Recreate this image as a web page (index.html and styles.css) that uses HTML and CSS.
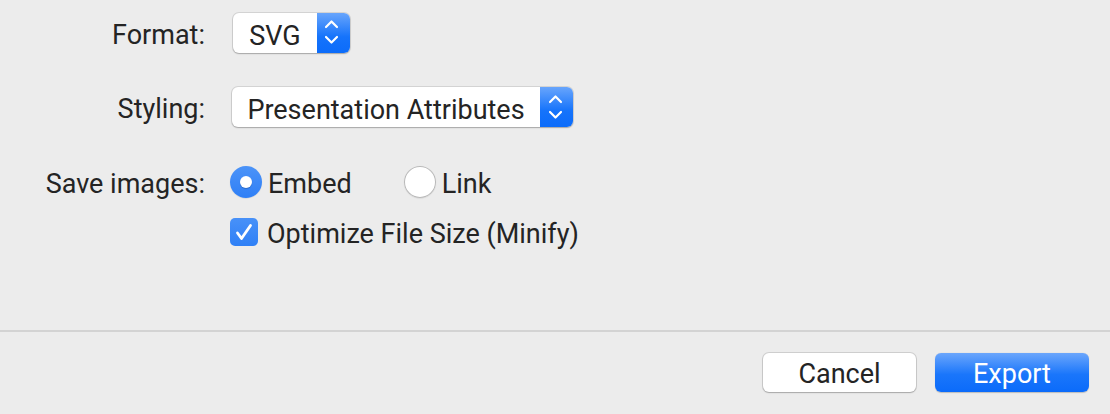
FILE: index.html
```html
<!DOCTYPE html>
<html>
<head>
<meta charset="utf-8">
<link rel="stylesheet" href="styles.css">
</head>
<body>
<div class="dialog">
  <div class="form">
    <div class="row row-format">
      <div class="label">Format:</div>
      <div class="control">
        <div class="popup popup-format">
          <span class="popup-text">SVG</span>
          <span class="popup-arrows">
            <svg width="33" height="40" viewBox="0 0 33 40"><path d="M9 14 L14.5 8.5 L20 14 M9 24 L14.5 29.5 L20 24" fill="none" stroke="#fff" stroke-width="2.2" stroke-linecap="round" stroke-linejoin="round"/></svg>
          </span>
        </div>
      </div>
    </div>
    <div class="row row-styling">
      <div class="label">Styling:</div>
      <div class="control">
        <div class="popup popup-styling">
          <span class="popup-text">Presentation Attributes</span>
          <span class="popup-arrows">
            <svg width="33" height="40" viewBox="0 0 33 40"><path d="M10 15 L15.5 9.5 L21 15 M10 25 L15.5 30.5 L21 25" fill="none" stroke="#fff" stroke-width="2.2" stroke-linecap="round" stroke-linejoin="round"/></svg>
          </span>
        </div>
      </div>
    </div>
    <div class="row row-save">
      <div class="label">Save images:</div>
      <div class="control radios">
        <label class="option"><span class="radio radio-on"><span class="dot"></span></span><span class="opt-text">Embed</span></label>
        <label class="option option-link"><span class="radio radio-off"></span><span class="opt-text">Link</span></label>
      </div>
    </div>
    <div class="row row-check">
      <div class="label"></div>
      <div class="control">
        <label class="option"><span class="checkbox"><svg width="28" height="28" viewBox="0 0 28 28"><path d="M7.5 15 L11.5 20.5 L20.5 7.5" fill="none" stroke="#fff" stroke-width="2.8" stroke-linecap="round" stroke-linejoin="round"/></svg></span><span class="opt-text check-text">Optimize File Size (Minify)</span></label>
      </div>
    </div>
  </div>
  <div class="footer">
    <button class="btn btn-cancel">Cancel</button>
    <button class="btn btn-export">Export</button>
  </div>
</div>
</body>
</html>
```
FILE: styles.css
```css
* { box-sizing: border-box; }
html, body {
  margin: 0;
  padding: 0;
  background: #ececec;
}
body {
  font-family: Roboto, "Liberation Sans", sans-serif;
  font-size: 27px;
  color: #242424;
}
.dialog {
  width: 1110px;
  height: 414px;
  display: flex;
  flex-direction: column;
}
.form {
  flex: 1;
  display: flex;
  flex-direction: column;
  border-bottom: 2px solid #d3d3d3;
}
.row {
  display: flex;
  align-items: center;
}
.label {
  width: 205px;
  text-align: right;
  padding-top: 3px;
}
.control {
  margin-left: 25px;
  display: flex;
  align-items: center;
}
.row-format { margin-top: 13px; height: 40px; }
.row-styling { margin-top: 34px; height: 40px; }
.row-save { margin-top: 39px; height: 32px; }
.row-check { margin-top: 20px; height: 28px; }

.popup {
  height: 40px;
  display: flex;
  background: #fff;
  border-radius: 6px;
  box-shadow: 0 0 0 1px rgba(0,0,0,0.10), 0 1px 1.5px rgba(0,0,0,0.22);
  overflow: hidden;
}
.popup-format { width: 117px; margin-left: 3px; }
.popup-styling { width: 341px; margin-left: 2px; }
.popup-text {
  flex: 1;
  text-align: center;
  line-height: 40px;
  padding-top: 3px;
}
.popup-arrows {
  width: 33px;
  height: 40px;
  background: linear-gradient(#68a5fc, #1573fb 60%, #0c6cfa);
  display: block;
}
.popup-arrows svg { display: block; }

.radios { gap: 0; }
.option {
  display: flex;
  align-items: center;
}
.option-link { margin-left: 52px; }
.radio {
  width: 32px;
  height: 32px;
  border-radius: 50%;
  display: flex;
  align-items: center;
  justify-content: center;
}
.radio-on {
  background: linear-gradient(#4b93f8, #2f7ff6);
  box-shadow: 0 0.5px 1px rgba(0,0,0,0.15);
}
.dot {
  width: 12px;
  height: 12px;
  border-radius: 50%;
  background: #fff;
  box-shadow: 0 1px 1px rgba(0,0,0,0.2);
}
.radio-off {
  background: #fff;
  box-shadow: inset 0 0 0 1px #b9b9b9, 0 0.5px 1px rgba(0,0,0,0.12);
}
.opt-text {
  margin-left: 6px;
  padding-top: 3px;
}
.check-text { margin-left: 9px; }
.checkbox {
  width: 28px;
  height: 28px;
  border-radius: 5px;
  background: linear-gradient(#4891f8, #2f80f6);
  display: block;
}
.checkbox svg { display: block; }

.footer {
  height: 82px;
  display: flex;
  justify-content: flex-end;
  align-items: flex-start;
  padding: 21px 21px 0 0;
  gap: 19px;
}
.btn {
  font-family: Roboto, "Liberation Sans", sans-serif;
  font-size: 27px;
  height: 39px;
  border: none;
  border-radius: 6px;
  padding: 3px 0 0 0;
  margin: 0;
}
.btn-cancel {
  width: 153px;
  background: #fff;
  color: #242424;
  box-shadow: 0 0 0 1px rgba(0,0,0,0.12), 0 1px 1.5px rgba(0,0,0,0.2);
}
.btn-export {
  width: 154px;
  color: #fff;
  background: linear-gradient(#6ba6fc, #1a76fb 55%, #0b6bfa);
  box-shadow: 0 0.5px 1px rgba(0,0,0,0.2);
}
```
